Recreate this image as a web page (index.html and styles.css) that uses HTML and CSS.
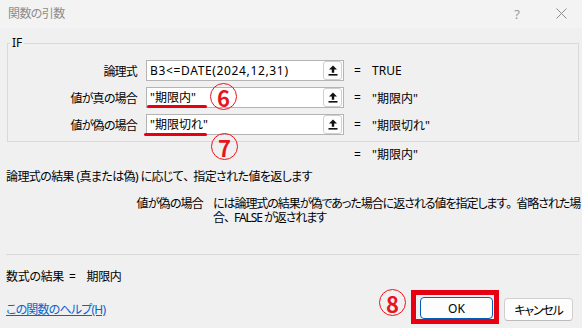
FILE: index.html
```html
<!DOCTYPE html>
<html lang="ja">
<head>
<meta charset="utf-8">
<title>関数の引数</title>
<link rel="stylesheet" href="styles.css">
</head>
<body>
<div class="dialog">
  <header class="titlebar">
    <span class="title">関数の引数</span>
    <span class="tb-help">?</span>
    <svg class="tb-close" width="11" height="11" viewBox="0 0 11 11"><path d="M0.5 0.5 L10.5 10.5 M10.5 0.5 L0.5 10.5" stroke="#8c8c8c" stroke-width="1" fill="none"/></svg>
  </header>
  <main class="content">
    <fieldset class="group">
      <legend>IF</legend>
      <div class="args">
        <div class="arg">
          <span class="arg-label">論理式</span>
          <div class="field">
            <span class="field-text field-formula">B3&lt;=DATE(2024,12,31)</span>
            <span class="ref-btn"><svg width="10" height="11" viewBox="0 0 10 11"><path d="M5 0.5 L9 4.5 H6.2 V7.8 H3.8 V4.5 H1 Z" fill="#111"/><rect x="0.5" y="9" width="9" height="1.6" fill="#111"/></svg></span>
          </div>
          <span class="eq">=</span><span class="val">TRUE</span>
        </div>
        <div class="arg">
          <span class="arg-label">値が真の場合</span>
          <div class="field">
            <span class="field-text">"期限内"</span>
            <span class="ref-btn"><svg width="10" height="11" viewBox="0 0 10 11"><path d="M5 0.5 L9 4.5 H6.2 V7.8 H3.8 V4.5 H1 Z" fill="#111"/><rect x="0.5" y="9" width="9" height="1.6" fill="#111"/></svg></span>
            <span class="uline uline-6"></span>
            <span class="mark mark-6">6</span>
          </div>
          <span class="eq">=</span><span class="val">"期限内"</span>
        </div>
        <div class="arg">
          <span class="arg-label">値が偽の場合</span>
          <div class="field">
            <span class="field-text">"期限切れ"</span>
            <span class="ref-btn"><svg width="10" height="11" viewBox="0 0 10 11"><path d="M5 0.5 L9 4.5 H6.2 V7.8 H3.8 V4.5 H1 Z" fill="#111"/><rect x="0.5" y="9" width="9" height="1.6" fill="#111"/></svg></span>
            <span class="uline uline-7"></span>
            <span class="mark mark-7">7</span>
          </div>
          <span class="eq">=</span><span class="val">"期限切れ"</span>
        </div>
      </div>
    </fieldset>
    <div class="overall"><span class="eq">=</span><span class="val">"期限内"</span></div>
    <p class="desc">論理式の結果 (真または偽) に応じて<span class="fw">、</span>指定された値を返します</p>
    <div class="argdesc">
      <span class="argdesc-name">値が偽の場合</span>
      <span class="argdesc-text">には論理式の結果が偽であった場合に返される値を指定します<span class="fw">。</span>省略された場<br>合<span class="fw">、</span>FALSE が返されます</span>
    </div>
    <hr class="sep">
    <div class="result"><span class="result-label">数式の結果 =</span><span class="result-val">期限内</span></div>
    <div class="footer">
      <a class="help-link" href="#">この関数のヘルプ(H)</a>
      <div class="buttons">
        <span class="mark mark-8">8</span>
        <div class="highlight"><button class="btn btn-ok">OK</button></div>
        <button class="btn btn-cancel">キャンセル</button>
      </div>
    </div>
  </main>
</div>
</body>
</html>
```

FILE: styles.css
```css
* { box-sizing: border-box; }
html, body { margin: 0; padding: 0; }
body {
  width: 582px;
  height: 328px;
  overflow: hidden;
  background: #f0f0f0;
  font-family: "Noto Sans", "Noto Sans CJK JP", sans-serif;
  font-size: 12px;
  color: #000;
  font-feature-settings: "palt";
}
.fw { font-feature-settings: normal; letter-spacing: -2px; }
.titlebar {
  height: 28px;
  background: #f3f3f3;
  display: flex;
  align-items: center;
  padding: 0 15px 0 8px;
  color: #8c8c8c;
}
.title { flex: 1; line-height: 14px; margin-top: -1px; letter-spacing: -0.6px; }
.tb-help { margin-right: 36px; font-size: 13px; color: #9a9a9a; line-height: 14px; margin-top: -1px; }
.tb-close { display: block; margin-top: -2px; }

.content { padding: 0 3px 0 6px; }

.group {
  margin: 8px 0 0 1px;
  border: 1px solid #d9d9d9;
  padding: 10px 4px 6px 2px;
  min-width: 0;
}
.group legend { padding: 0 2px; line-height: 14px; font-size: 12px; }
.args { display: flex; flex-direction: column; gap: 6px; }
.arg { display: flex; align-items: center; height: 21px; }
.arg-label { width: 127px; text-align: right; margin-right: 9px; white-space: nowrap; letter-spacing: -0.8px; }
.field {
  position: relative;
  width: 198px;
  height: 21px;
  border: 1px solid #b4b4b4;
  background: #fff;
  display: flex;
  align-items: center;
  padding-left: 3px;
}
.field-text { flex: 1; white-space: nowrap; line-height: 14px; }
.field-formula { letter-spacing: 0.65px; }
.ref-btn {
  width: 19px;
  height: 19px;
  margin-right: 1px;
  border: 1px solid #cfcfcf;
  border-radius: 3px;
  background: #fdfdfd;
  display: flex;
  align-items: center;
  justify-content: center;
}
.ref-btn svg { display: block; }
.eq { margin-left: 10px; width: 18px; flex: none; }
.val { white-space: nowrap; }

.uline {
  position: absolute;
  height: 3px;
  background: #e60012;
  border-radius: 2px;
}
.uline-6 { left: 0; top: 17px; width: 60px; }
.uline-7 { left: -3px; top: 18px; width: 63px; }

.mark {
  width: 27px;
  height: 27px;
  border: 1.5px solid #e8141c;
  border-radius: 50%;
  color: #e8141c;
  font-family: "Noto Sans CJK JP", sans-serif;
  font-weight: 700;
  font-size: 22px;
  line-height: 1;
  display: flex;
  align-items: center;
  justify-content: center;
  flex: none;
}
.mark-6 { position: absolute; left: 63px; top: -5px; }
.mark-7 { position: absolute; left: 64px; top: 18px; }
.mark-8 { margin-top: -1px; margin-right: 5px; }

.overall { display: flex; margin: 6px 0 0 338px; line-height: 14px; }
.desc { margin: 8px 0 0; line-height: 14px; letter-spacing: -0.6px; }
.argdesc { display: flex; margin-top: 13px; line-height: 14px; }
.argdesc-name { width: 197px; text-align: right; margin-right: 10px; flex: none; letter-spacing: -0.8px; }
.argdesc-text { white-space: nowrap; letter-spacing: -1.05px; }
.sep { margin: 29px 0 0; border: 0; border-top: 1px solid #d9d9d9; height: 0; }
.result { display: flex; margin-top: 15px; line-height: 14px; }
.result-label { letter-spacing: -0.3px; word-spacing: 2px; }
.result-val { margin-left: 11px; letter-spacing: -0.3px; }

.footer { display: flex; margin-top: 6px; height: 34px; }
.help-link {
  color: #0a64c8;
  text-decoration: underline;
  margin-top: 13px;
  line-height: 14px;
  align-self: flex-start;
  letter-spacing: -0.8px;
}
.buttons { margin-left: auto; margin-right: 6px; display: flex; align-items: flex-start; }
.highlight { border: 5px solid #e60012; padding: 2px 1px 0 4px; }
.btn {
  display: block;
  height: 22px;
  width: 73px;
  border: 1px solid #d0d0d0;
  border-bottom-color: #bcbcbc;
  border-radius: 4px;
  background: #fdfdfd;
  font: inherit;
  font-size: 12px;
  padding: 0;
  color: #000;
}
.btn-ok { border-color: #005fb8; }
.btn-cancel { width: 69px; height: 23px; margin-left: 5px; margin-top: 8px; letter-spacing: -1.2px; }
```
